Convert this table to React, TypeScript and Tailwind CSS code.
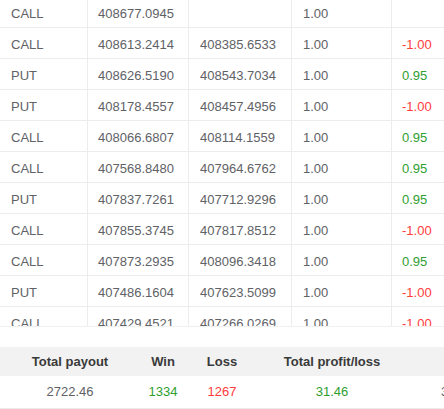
import React from 'react'

interface Trade {
  type: 'CALL' | 'PUT'
  entry: string
  exit: string
  amount: string
  profit: string | null
}

const TRADES: Trade[] = [
  { type: 'CALL', entry: '408677.0945', exit: '', amount: '1.00', profit: null },
  { type: 'CALL', entry: '408613.2414', exit: '408385.6533', amount: '1.00', profit: '-1.00' },
  { type: 'PUT', entry: '408626.5190', exit: '408543.7034', amount: '1.00', profit: '0.95' },
  { type: 'PUT', entry: '408178.4557', exit: '408457.4956', amount: '1.00', profit: '-1.00' },
  { type: 'CALL', entry: '408066.6807', exit: '408114.1559', amount: '1.00', profit: '0.95' },
  { type: 'CALL', entry: '407568.8480', exit: '407964.6762', amount: '1.00', profit: '0.95' },
  { type: 'PUT', entry: '407837.7261', exit: '407712.9296', amount: '1.00', profit: '0.95' },
  { type: 'CALL', entry: '407855.3745', exit: '407817.8512', amount: '1.00', profit: '-1.00' },
  { type: 'CALL', entry: '407873.2935', exit: '408096.3418', amount: '1.00', profit: '0.95' },
  { type: 'PUT', entry: '407486.1604', exit: '407623.5099', amount: '1.00', profit: '-1.00' },
  { type: 'CALL', entry: '407429.4521', exit: '407266.0269', amount: '1.00', profit: '-1.00' },
]

function profitColor(p: string | null) {
  if (!p) return ''
  return p.startsWith('-') ? 'text-[#ff3b3b]' : 'text-[#2f9e2f]'
}

export default function App() {
  return (
    <div
      className="w-[444px] h-[409px] overflow-hidden bg-white text-[13px] text-[#606266]"
      style={{ fontFamily: '"Liberation Sans", Arial, sans-serif' }}
    >
      {/* trade list, scrolled a little */}
      <div className="h-[327px] overflow-hidden border-b border-[#f0f0f0]">
        <div className="-mt-[3px] w-[480px]">
          {TRADES.map((t, i) => (
            <div key={i} className="flex h-[31px] border-b border-[#ececec]">
              <div className="w-[88px] flex items-center pt-[3px] pl-[11px] border-r border-[#ececec]">{t.type}</div>
              <div className="w-[101px] flex items-center pt-[3px] pl-[10px] border-r border-[#ececec]">{t.entry}</div>
              <div className="w-[103px] flex items-center pt-[3px] pl-[11px] border-r border-[#ececec]">{t.exit}</div>
              <div className="w-[100px] flex items-center pt-[3px] pl-[11px] border-r border-[#ececec]">{t.amount}</div>
              <div className={`w-[88px] flex items-center pt-[3px] pl-[10px] ${profitColor(t.profit)}`}>{t.profit}</div>
            </div>
          ))}
        </div>
      </div>

      {/* summary */}
      <div className="mt-[20px] w-[480px]">
        <div className="flex h-[29px] items-center bg-[#f2f2f2] font-bold text-[#3a3a3a]">
          <div className="w-[140px] text-center">Total payout</div>
          <div className="w-[46px] text-center">Win</div>
          <div className="w-[72px] text-center">Loss</div>
          <div className="w-[148px] text-center">Total profit/loss</div>
          <div className="w-[74px]"></div>
        </div>
        <div className="flex h-[33px] items-center border-b border-[#ececec]">
          <div className="w-[140px] text-center">2722.46</div>
          <div className="w-[46px] text-center text-[#2f9e2f]">1334</div>
          <div className="w-[72px] text-center text-[#ff3b3b]">1267</div>
          <div className="w-[148px] text-center text-[#2f9e2f]">31.46</div>
          <div className="w-[74px] pl-[35px]">3</div>
        </div>
      </div>
    </div>
  )
}
